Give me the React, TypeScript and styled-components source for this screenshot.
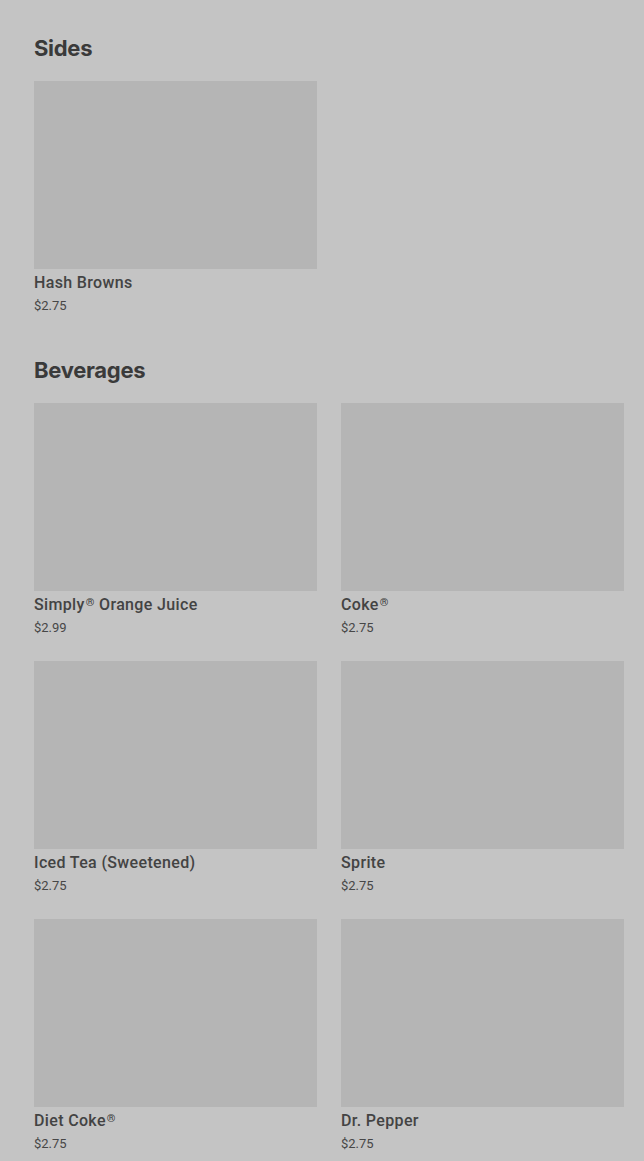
import styled, { createGlobalStyle } from 'styled-components';

const GlobalStyle = createGlobalStyle`
  body {
    margin: 0;
    background-color: #c4c4c4;
    font-family: Roboto, 'Liberation Sans', sans-serif;
    color: #3b3b3b;
  }
`;

const Page = styled.main`
  padding: 34px 20px 20px 34px;
  display: flex;
  flex-direction: column;
  gap: 41px;
`;

const Section = styled.section`
  display: flex;
  flex-direction: column;
`;

const Heading = styled.h2`
  margin: 0 0 19px;
  font-family: Inter, 'Liberation Sans', sans-serif;
  font-size: 22px;
  line-height: 28px;
  font-weight: 700;
  letter-spacing: -0.3px;
  color: #3a3a3a;
`;

const Grid = styled.ul`
  list-style: none;
  margin: 0;
  padding: 0;
  display: grid;
  grid-template-columns: repeat(2, 283px);
  column-gap: 24px;
  row-gap: 24px;
`;

const Card = styled.li`
  display: flex;
  flex-direction: column;
`;

const Thumb = styled.div`
  height: 188px;
  background-color: #b5b5b5;
`;

const Name = styled.div`
  margin-top: 4px;
  font-size: 16px;
  line-height: 20px;
  font-weight: 500;
  letter-spacing: 0.35px;
  color: #434343;

  sup {
    font-size: 11px;
    line-height: 0;
    margin-left: 1px;
    vertical-align: 4px;
  }
`;

const Price = styled.div`
  margin-top: 4px;
  font-size: 13px;
  line-height: 18px;
  color: #474747;
`;

interface IItem {
  name: string;
  reg?: boolean;
  rest?: string;
  price: string;
}

const menu: { title: string; items: IItem[] }[] = [
  {
    title: 'Sides',
    items: [{ name: 'Hash Browns', price: '$2.75' }],
  },
  {
    title: 'Beverages',
    items: [
      { name: 'Simply', reg: true, rest: ' Orange Juice', price: '$2.99' },
      { name: 'Coke', reg: true, price: '$2.75' },
      { name: 'Iced Tea (Sweetened)', price: '$2.75' },
      { name: 'Sprite', price: '$2.75' },
      { name: 'Diet Coke', reg: true, price: '$2.75' },
      { name: 'Dr. Pepper', price: '$2.75' },
    ],
  },
];

const App = () => {
  return (
    <>
      <GlobalStyle />
      <Page>
        {menu.map(section => (
          <Section key={section.title}>
            <Heading>{section.title}</Heading>
            <Grid>
              {section.items.map(item => (
                <Card key={item.name}>
                  <Thumb />
                  <Name>
                    {item.name}
                    {item.reg && <sup>®</sup>}
                    {item.rest}
                  </Name>
                  <Price>{item.price}</Price>
                </Card>
              ))}
            </Grid>
          </Section>
        ))}
      </Page>
    </>
  );
};

export default App;
